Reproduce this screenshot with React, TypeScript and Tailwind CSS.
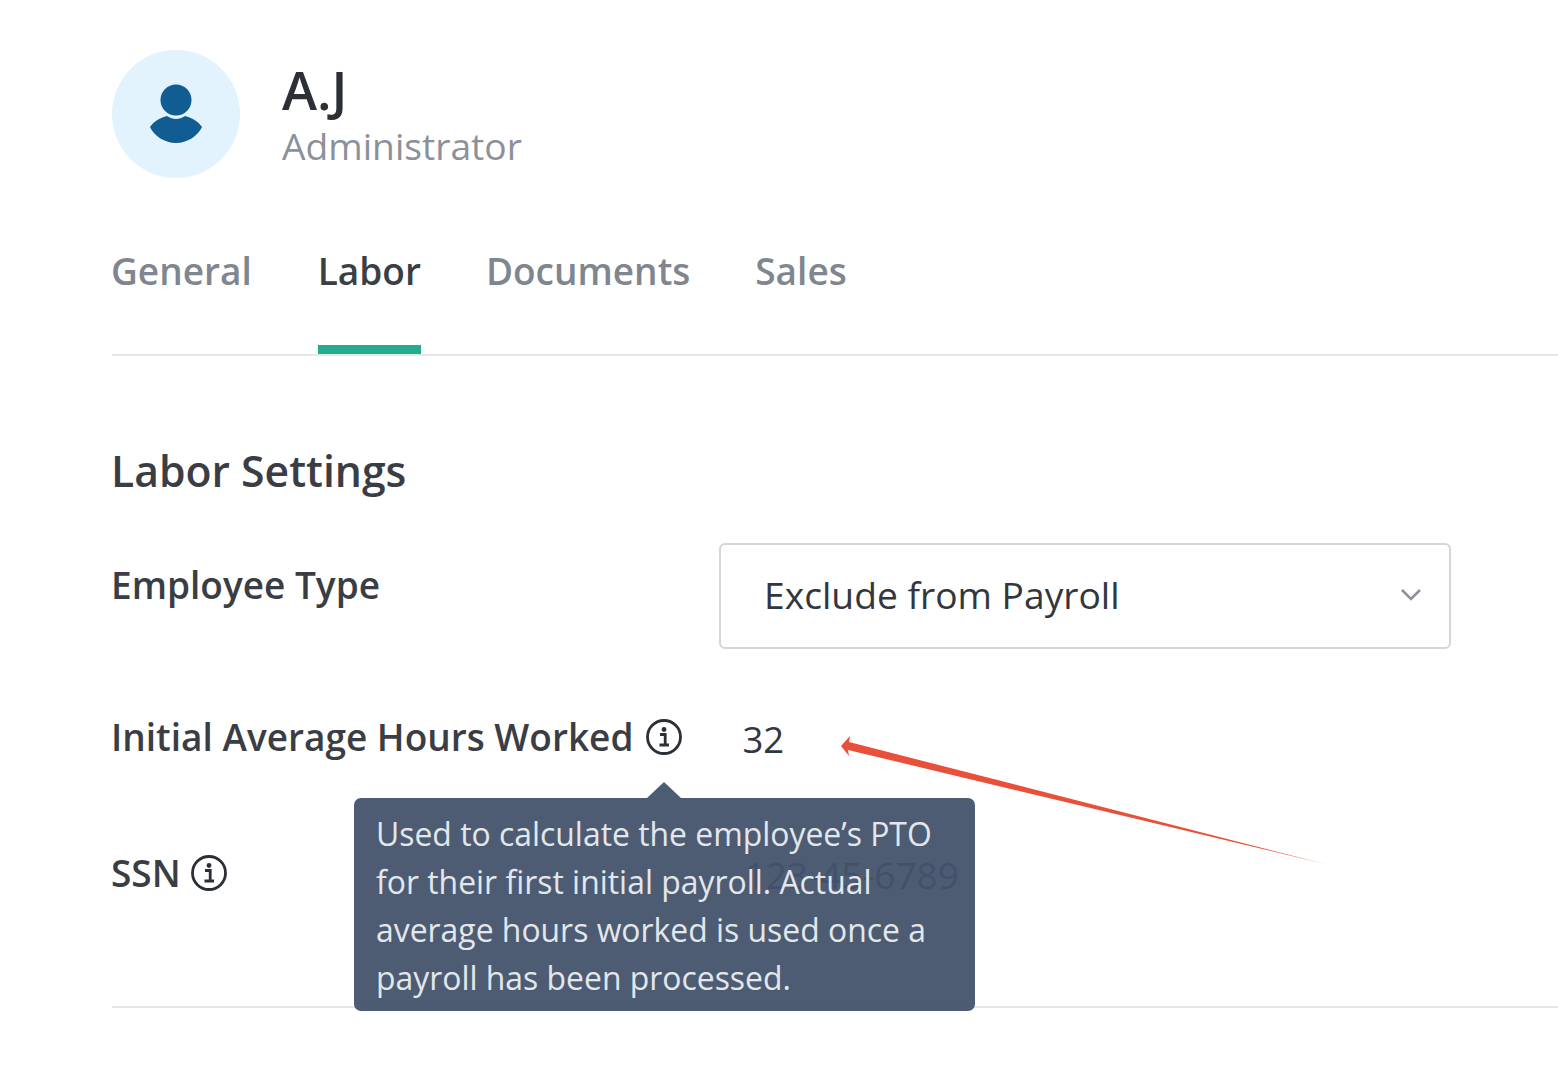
export default function App() {
  const Info = () => (
    <svg width="38" height="38" viewBox="0 0 38 38" fill="none" className="shrink-0">
      <circle cx="19" cy="19" r="16.5" stroke="#2b2f36" strokeWidth="2.8" />
      <circle cx="19" cy="11.5" r="2.4" fill="#2b2f36" />
      <path d="M15 16.5h5.2v10M14.5 27h9.5" stroke="#2b2f36" strokeWidth="2.8" />
    </svg>
  );
  return (
    <div className="relative h-[1091px] w-[1558px] overflow-hidden bg-white pl-[112px] font-['Open_Sans',sans-serif] text-[#2e3238]">
      <div className="flex h-[204px] items-start gap-[42px] pt-[50px]">
        <div className="flex h-[128px] w-[128px] items-center justify-center rounded-full bg-[#e2f3fe]">
          <svg width="56" height="60" viewBox="0 0 56 60" fill="#115c92">
            <circle cx="28" cy="16" r="15.5" />
            <path d="M2 43C6 37 12 34 19 32C22 34 25 35 28 35C31 35 34 34 37 32C44 34 50 37 54 43C50 52 39 59 28 59C17 59 6 52 2 43Z" />
          </svg>
        </div>
        <div className="pt-[10px]">
          <div className="text-[53px] leading-[60px] font-semibold text-[#2c2f35]">A.J</div>
          <div className="mt-[2px] text-[37.2px] leading-[48px] text-[#8b9099]">Administrator</div>
        </div>
      </div>
      <div className="flex h-[152px] gap-[65px] border-b-2 border-[#e5e7eb] text-[37px] font-semibold text-[#80868f]">
        <div className="mr-px -ml-px pt-[42px] leading-[50px]">General</div>
        <div className="h-[150px] border-b-[9px] border-[#22ad92] pt-[42px] leading-[50px] text-[#3a3f46]">Labor</div>
        <div className="pt-[42px] leading-[50px]">Documents</div>
        <div className="pt-[42px] leading-[50px]">Sales</div>
      </div>
      <div className="mt-[85px] -ml-px text-[42.7px] leading-[60px] font-semibold text-[#3a3e44]">Labor Settings</div>
      <div className="mt-[42px] flex h-[106px] items-start">
        <div className="w-[607px] pt-[17px] text-[37px] leading-[50px] font-semibold text-[#3a3e44]">
          <span className="-ml-px">Employee Type</span>
        </div>
        <div className="flex h-[106px] w-[732px] items-center justify-between rounded-[6px] border-2 border-[#d3d6da] pr-[26px] pb-[2px] pl-[43px] text-[37.2px] text-[#33373d]">
          <span>Exclude from Payroll</span>
          <svg width="24" height="16" viewBox="0 0 24 16" fill="none">
            <path d="M3 3l9 9 9-9" stroke="#8b9099" strokeWidth="2.6" />
          </svg>
        </div>
      </div>
      <div className="mt-[63px] flex h-[50px] items-center">
        <div className="-ml-px flex items-center gap-[12px] text-[37px] leading-[50px] font-semibold text-[#3a3e44]">
          Initial Average Hours Worked <Info />
        </div>
        <div className="ml-[59px] pt-[5px] text-[36.5px] text-[#33373d]">32</div>
      </div>
      <div className="mt-[86px] flex h-[50px] items-center">
        <div className="-ml-px flex items-center gap-[9px] text-[37px] leading-[50px] font-semibold text-[#3a3e44]">
          SSN <Info />
        </div>
        <div className="ml-[517px] pt-[4px] text-[37px] text-[#2a3340]">123-45-6789</div>
      </div>
      <div className="mt-[108px] h-[2px] bg-[#e5e7eb]" />

      <div className="absolute top-[798px] left-[354px] h-[213px] w-[621px] rounded-[7px] bg-[#43536b]/95 px-[22px] pt-[12px] text-[31.9px] leading-[48px] text-[#e2e7ec]">
        <div className="absolute top-[-16px] left-[293px] h-0 w-0 border-r-[17px] border-b-[16px] border-l-[17px] border-r-transparent border-b-[#4c5c72] border-l-transparent" />
        Used to calculate the employee’s PTO
        <br />
        for their first initial payroll. Actual
        <br />
        average hours worked is used once a
        <br />
        payroll has been processed.
      </div>

      <svg className="absolute top-[730px] left-[835px]" width="500" height="140" viewBox="0 0 500 140">
        <polygon points="6,16 15,6 14,12 490,134 13,20 14,26" fill="#e8503a" />
      </svg>
    </div>
  );
}
